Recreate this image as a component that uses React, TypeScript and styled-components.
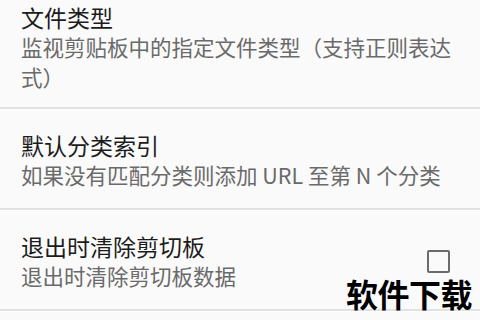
import React from 'react'
import styled, { createGlobalStyle } from 'styled-components'

const GlobalStyle = createGlobalStyle`
  html, body {
    margin: 0;
    padding: 0;
    background: #fafafa;
    overflow: hidden;
  }
  body {
    font-family: "Noto Sans CJK SC", "Noto Sans", sans-serif;
  }
`

const Screen = styled.div`
  position: relative;
  width: 480px;
  height: 320px;
  overflow: hidden;
  background: #fafafa;
`

const List = styled.div`
  display: flex;
  flex-direction: column;
`

const Row = styled.div<{ top?: number; bottom?: number }>`
  display: flex;
  align-items: center;
  padding: ${({ top = 21 }) => top}px 24px ${({ bottom = 18 }) => bottom}px 21px;
  border-bottom: 2px solid #e2e2e2;
  box-shadow: 0 1px 0 #ffffff;
`

const Texts = styled.div`
  flex: 1;
  min-width: 0;
  display: flex;
  flex-direction: column;
`

const Title = styled.div`
  font-size: 23px;
  line-height: 30px;
  color: #1c1c1c;
`

const Summary = styled.div`
  font-size: 21.5px;
  line-height: 30px;
  color: #6a6a6a;
  width: 445px;
`

const Checkbox = styled.div`
  width: 19px;
  height: 19px;
  border: 2px solid #6b6b6b;
  border-radius: 2px;
  margin-left: 12px;
  margin-right: 6px;
`

const Watermark = styled.div`
  position: absolute;
  right: 8px;
  bottom: 9px;
  font-size: 32px;
  font-weight: 700;
  line-height: 36px;
  color: #000;
  letter-spacing: -0.5px;
`

export default function App() {
  return (
    <Screen>
      <GlobalStyle />
      <List>
        <Row top={2} bottom={15}>
          <Texts>
            <Title>文件类型</Title>
            <Summary>监视剪贴板中的指定文件类型（支持正则表达式）</Summary>
          </Texts>
        </Row>
        <Row>
          <Texts>
            <Title>默认分类索引</Title>
            <Summary>如果没有匹配分类则添加 URL 至第 N 个分类</Summary>
          </Texts>
        </Row>
        <Row>
          <Texts>
            <Title>退出时清除剪切板</Title>
            <Summary>退出时清除剪切板数据</Summary>
          </Texts>
          <Checkbox />
        </Row>
      </List>
      <Watermark>软件下载</Watermark>
    </Screen>
  )
}
